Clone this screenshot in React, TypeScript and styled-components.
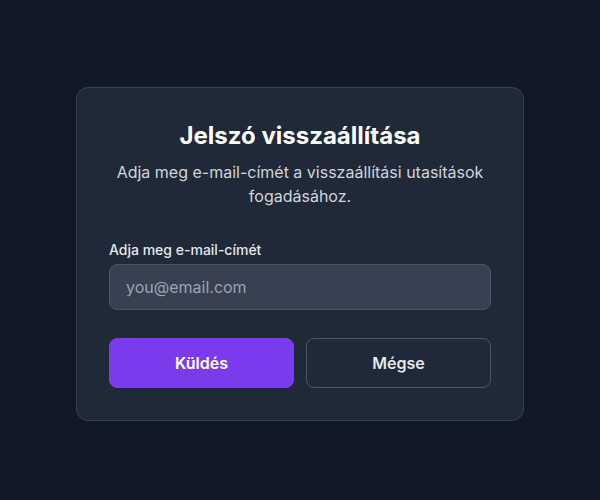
import React from 'react'
import styled, { createGlobalStyle } from 'styled-components'

const GlobalStyle = createGlobalStyle`
	* {
		box-sizing: border-box;
	}
	body {
		margin: 0;
		background: #111827;
		font-family: Inter, "Noto Sans", sans-serif;
	}
`

const Page = styled.div`
	min-height: 100vh;
	display: flex;
	justify-content: center;
	align-items: flex-start;
	padding-top: 87px;
`

const Card = styled.div`
	width: 448px;
	background: #1f2937;
	border: 1px solid #374151;
	border-radius: 12px;
	padding: 32px;
`

const Title = styled.h1`
	margin: 0;
	font-size: 24px;
	line-height: 32px;
	font-weight: 700;
	color: #ffffff;
	text-align: center;
`

const Subtitle = styled.p`
	margin: 8px 0 0;
	font-size: 16px;
	line-height: 24px;
	color: #d1d5db;
	text-align: center;
`

const Form = styled.form`
	margin-top: 32px;
	display: flex;
	flex-direction: column;
`

const Label = styled.label`
	font-size: 14px;
	line-height: 20px;
	font-weight: 500;
	color: #e5e7eb;
	margin-bottom: 4px;
`

const Input = styled.input`
	height: 46px;
	padding: 0 16px;
	background: #374151;
	border: 1px solid #4b5563;
	border-radius: 8px;
	font-family: inherit;
	font-size: 16px;
	color: #f9fafb;
	outline: none;
	&::placeholder {
		color: #9ca3af;
	}
`

const Actions = styled.div`
	margin-top: 28px;
	display: grid;
	grid-template-columns: 1fr 1fr;
	gap: 12px;
`

const Button = styled.button<{ $primary?: boolean }>`
	height: 50px;
	border-radius: 8px;
	font-family: inherit;
	font-size: 16px;
	font-weight: 600;
	cursor: pointer;
	border: 1px solid ${p => (p.$primary ? '#7c3aed' : '#4b5563')};
	background: ${p => (p.$primary ? '#7c3aed' : 'transparent')};
	color: ${p => (p.$primary ? '#ffffff' : '#e5e7eb')};
`

export default function App() {
	return (
		<Page>
			<GlobalStyle />
			<Card>
				<Title>Jelszó visszaállítása</Title>
				<Subtitle>Adja meg e-mail-címét a visszaállítási utasítások fogadásához.</Subtitle>
				<Form onSubmit={e => e.preventDefault()}>
					<Label htmlFor="email">Adja meg e-mail-címét</Label>
					<Input id="email" type="email" placeholder="you@email.com" />
					<Actions>
						<Button $primary type="submit">Küldés</Button>
						<Button type="button">Mégse</Button>
					</Actions>
				</Form>
			</Card>
		</Page>
	)
}
